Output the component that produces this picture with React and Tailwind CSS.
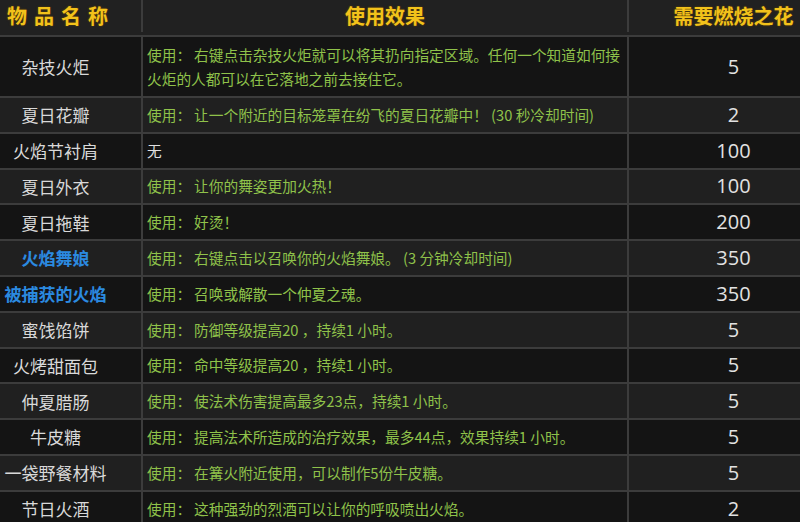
const rows = [
  { name: "杂技火炬", effect: ["右键点击杂技火炬就可以将其扔向指定区域。任何一个知道如何接", "火炬的人都可以在它落地之前去接住它。"], cost: "5", tall: true },
  { name: "夏日花瓣", effect: ["让一个附近的目标笼罩在纷飞的夏日花瓣中！ (30 秒冷却时间)"], cost: "2" },
  { name: "火焰节衬肩", plain: "无", cost: "100" },
  { name: "夏日外衣", effect: ["让你的舞姿更加火热！"], cost: "100" },
  { name: "夏日拖鞋", effect: ["好烫！"], cost: "200" },
  { name: "火焰舞娘", blue: true, effect: ["右键点击以召唤你的火焰舞娘。 (3 分钟冷却时间)"], cost: "350" },
  { name: "被捕获的火焰", blue: true, effect: ["召唤或解散一个仲夏之魂。"], cost: "350" },
  { name: "蜜饯馅饼", effect: ["防御等级提高20 ，持续1 小时。"], cost: "5" },
  { name: "火烤甜面包", effect: ["命中等级提高20 ，持续1 小时。"], cost: "5" },
  { name: "仲夏腊肠", effect: ["使法术伤害提高最多23点，持续1 小时。"], cost: "5" },
  { name: "牛皮糖", effect: ["提高法术所造成的治疗效果，最多44点，效果持续1 小时。"], cost: "5" },
  { name: "一袋野餐材料", effect: ["在篝火附近使用，可以制作5份牛皮糖。"], cost: "5" },
  { name: "节日火酒", effect: ["这种强劲的烈酒可以让你的呼吸喷出火焰。"], cost: "2" },
]

const font = { fontFamily: '"Noto Sans CJK SC", "Microsoft YaHei", sans-serif' }

export default function App() {
  return (
    <div className="w-[800px] h-[522px] overflow-hidden bg-[#161616]" style={font}>
      {/* Header */}
      <div className="flex h-[35px] pb-[3px] bg-[#212121] font-bold text-[#f2c21b] text-[20px] [text-shadow:0_0_2px_#6b4a00]">
        <div className="w-[143px] shrink-0 border-r-2 border-[#3c3c3c] flex items-center pl-[7px] tracking-[7px]">物品名称</div>
        <div className="w-[486px] shrink-0 border-r-2 border-[#3c3c3c] flex items-center justify-center">使用效果</div>
        <div className="flex-1 flex items-center justify-center pl-[38px]">需要燃烧之花</div>
      </div>

      {rows.map((r, i) => (
        <div
          key={i}
          className={`flex border-t-2 border-[#3c3c3c] ${r.tall ? "h-[61px]" : "h-[35.8px]"} ${i % 2 === 0 ? "bg-[#141414]" : "bg-[#202020]"}`}
        >
          <div
            className={`w-[143px] shrink-0 border-r-2 border-[#3c3c3c] flex items-center justify-center pr-[30px] text-[17px] whitespace-nowrap ${r.blue ? "text-[#2b8ae0] font-bold" : "text-[#d9d9d9]"}`}
          >
            {r.name}
          </div>
          <div className="w-[486px] shrink-0 border-r-2 border-[#3c3c3c] flex flex-col justify-center pl-[4px] text-[14.7px] leading-[24px] whitespace-nowrap">
            {r.plain ? (
              <span className="text-[#e0e0e0]">{r.plain}</span>
            ) : (
              r.effect.map((line, j) => (
                <div key={j} className="text-[#8fc24a]">
                  {j === 0 && <span className="mr-[3px]">使用：</span>}
                  {line}
                </div>
              ))
            )}
          </div>
          <div className="flex-1 flex items-center justify-center pl-[38px] text-[20px] text-[#e2e2e2]" style={{ fontFamily: '"Open Sans", "Noto Sans", sans-serif' }}>
            {r.cost}
          </div>
        </div>
      ))}
    </div>
  )
}
